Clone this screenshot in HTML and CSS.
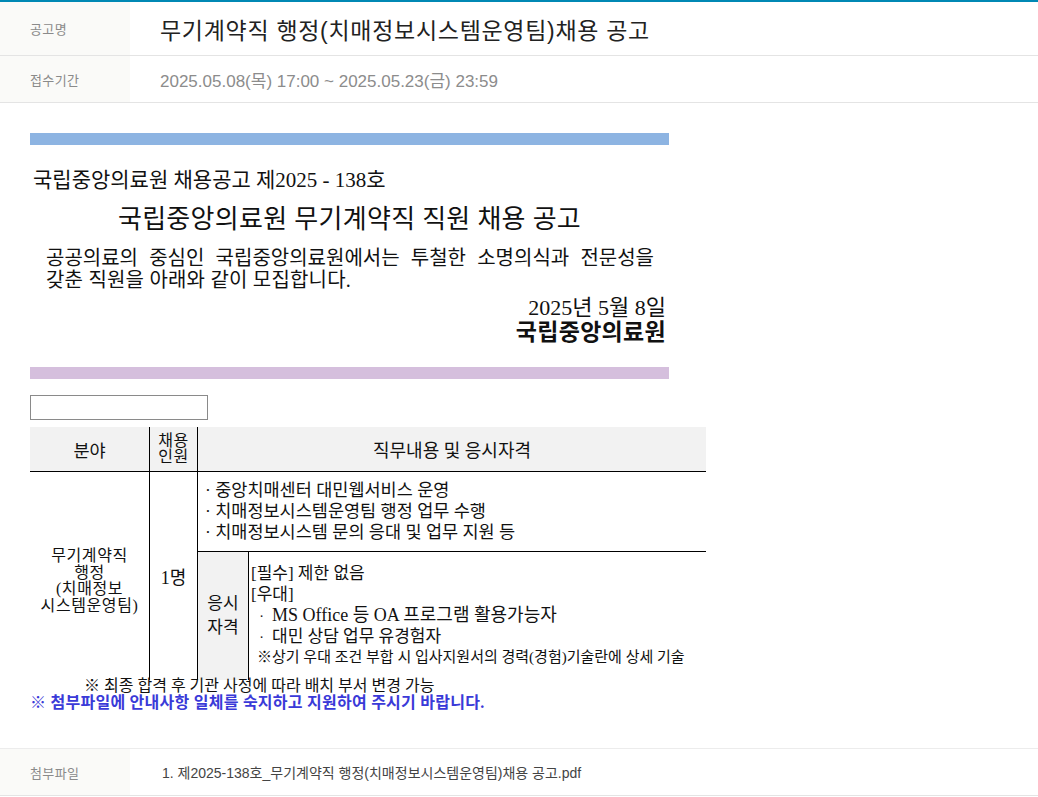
FILE: index.html
```html
<!DOCTYPE html>
<html lang="ko">
<head>
<meta charset="utf-8">
<title>무기계약직 행정(치매정보시스템운영팀)채용 공고</title>
<link rel="stylesheet" href="styles.css">
</head>
<body>
<div class="page">
  <div class="info-row row-title">
    <div class="label">공고명</div>
    <div class="value title">무기계약직 행정(치매정보시스템운영팀)채용 공고</div>
  </div>
  <div class="info-row">
    <div class="label">접수기간</div>
    <div class="value period">2025.05.08(목) 17:00 ~ 2025.05.23(금) 23:59</div>
  </div>

  <div class="content">
    <div class="notice">
      <div class="bar bar-blue"></div>
      <p class="doc-no">국립중앙의료원 채용공고 제2025 - 138호</p>
      <h1 class="doc-title">국립중앙의료원 무기계약직 직원 채용 공고</h1>
      <p class="intro intro-first">공공의료의 &nbsp;중심인 &nbsp;국립중앙의료원에서는 &nbsp;투철한 &nbsp;소명의식과 &nbsp;전문성을</p>
      <p class="intro intro-second">갖춘 직원을 아래와 같이 모집합니다.</p>
      <p class="date">2025년 5월 8일</p>
      <p class="org">국립중앙의료원</p>
      <div class="bar bar-purple"></div>
    </div>

    <div class="blank-box"></div>

    <table class="jobs">
      <thead>
        <tr>
          <th class="c-field">분야</th>
          <th class="c-num"><span class="stack">채용</span><span class="stack">인원</span></th>
          <th colspan="2" class="c-desc">직무내용 및 응시자격</th>
        </tr>
      </thead>
      <tbody>
        <tr>
          <td rowspan="2" class="field">
            <span class="f-line">무기계약직</span>
            <span class="f-line">행정</span>
            <span class="f-line">(치매정보</span>
            <span class="f-line">시스템운영팀)</span>
          </td>
          <td rowspan="2" class="num">1명</td>
          <td colspan="2" class="duties">
            <div class="d-line">· 중앙치매센터 대민웹서비스 운영</div>
            <div class="d-line">· 치매정보시스템운영팀 행정 업무 수행</div>
            <div class="d-line">· 치매정보시스템 문의 응대 및 업무 지원 등</div>
          </td>
        </tr>
        <tr>
          <td class="qual-head">응시<br>자격</td>
          <td class="qual">
            <div class="q-line">[필수] 제한 없음</div>
            <div class="q-line">[우대]</div>
            <div class="q-item"><span class="dot">·</span>MS Office 등 OA 프로그램 활용가능자</div>
            <div class="q-item q-small"><span class="dot">·</span>대민 상담 업무 유경험자</div>
            <div class="q-note">※상기 우대 조건 부합 시 입사지원서의 경력(경험)기술란에 상세 기술</div>
          </td>
        </tr>
      </tbody>
    </table>
    <p class="note">※ 최종 합격 후 기관 사정에 따라 배치 부서 변경 가능</p>
    <p class="note-blue">※ 첨부파일에 안내사항 일체를 숙지하고 지원하여 주시기 바랍니다.</p>
  </div>

  <div class="info-row row-file">
    <div class="label">첨부파일</div>
    <div class="value file">1. 제2025-138호_무기계약직 행정(치매정보시스템운영팀)채용 공고.pdf</div>
  </div>
</div>
</body>
</html>
```

FILE: styles.css
```css
html, body {
  margin: 0;
  padding: 0;
  background: #fff;
}
body {
  font-family: "Liberation Sans", "Noto Sans CJK KR", sans-serif;
  color: #222;
}
.page {
  border-top: 2px solid #0088b4;
}
.info-row {
  display: flex;
  height: 46px;
  border-bottom: 1px solid #e4e4e4;
}
.row-title {
  height: 53px;
}
.row-file {
  border-top: 1px solid #ececec;
}
.label {
  width: 100px;
  padding-left: 30px;
  background: #fafaf8;
  display: flex;
  align-items: center;
  font-size: 13px;
  letter-spacing: 0.4px;
  color: #8a8a8a;
}
.value {
  padding-left: 30px;
  display: flex;
  align-items: center;
}
.title {
  font-size: 23px;
  letter-spacing: 0.7px;
  color: #222;
}
.period {
  font-size: 17px;
  color: #8c8c8c;
}
.file {
  font-size: 14px;
  color: #444;
  padding-left: 32px;
}

.content {
  padding: 30px 30px 37px;
  font-family: "Liberation Serif", "Noto Sans CJK KR", serif;
  color: #111;
}
.notice {
  width: 639px;
}
.bar {
  height: 12px;
}
.bar-blue {
  background: #8db4e2;
}
.bar-purple {
  background: #d5bfdd;
  margin-top: 21px;
}
p {
  margin: 0;
}
.doc-no {
  font-size: 21px;
  line-height: 24px;
  margin-top: 23px;
  padding-left: 3px;
  white-space: nowrap;
}
.doc-title {
  font-size: 26px;
  font-weight: normal;
  text-align: center;
  line-height: 32px;
  letter-spacing: 0.3px;
  margin: 12px 0 0;
  white-space: nowrap;
}
.intro {
  font-size: 20px;
  line-height: 22px;
  padding-left: 16px;
}
.intro-first {
  margin-top: 11px;
  width: 608px;
  text-align: justify;
  text-align-last: justify;
}
.intro-second {
  white-space: nowrap;
  letter-spacing: 0.2px;
}
.date {
  font-size: 22px;
  line-height: 24px;
  text-align: right;
  padding-right: 3px;
  margin-top: 5px;
}
.org {
  font-size: 23px;
  font-weight: bold;
  line-height: 26px;
  text-align: right;
  padding-right: 3px;
  letter-spacing: 0.3px;
}
.blank-box {
  width: 176px;
  height: 23px;
  border: 1px solid #8a8a8a;
  margin-top: 16px;
}
.jobs {
  width: 676px;
  border-collapse: collapse;
  margin-top: 7px;
  font-size: 17.5px;
}
.jobs th {
  background: #f2f2f2;
  font-weight: normal;
  height: 44px;
  padding: 0;
  border-bottom: 1px solid #000;
}
.jobs .c-field {
  width: 119px;
  border-right: 1px solid #000;
}
.jobs .c-num {
  width: 47px;
  border-right: 1px solid #000;
  font-size: 16px;
}
.stack {
  display: block;
  height: 16px;
  line-height: 16px;
  letter-spacing: 0.5px;
}
.jobs .c-desc {
  font-size: 18px;
}
.jobs td {
  padding: 0;
  vertical-align: middle;
}
.field {
  text-align: center;
  border-right: 1px solid #000;
  font-size: 16px;
  letter-spacing: 0.6px;
  padding-top: 10px !important;
}
.f-line {
  display: block;
  height: 16.5px;
  line-height: 16.5px;
  white-space: nowrap;
}
.num {
  text-align: center;
  font-size: 18px;
  border-right: 1px solid #000;
}
.duties {
  height: 79px;
  border-bottom: 1px solid #000;
  padding-left: 7px !important;
}
.d-line {
  height: 21px;
  line-height: 21px;
}
.qual-head {
  width: 50px;
  background: #f2f2f2;
  border-right: 1px solid #000;
  text-align: center;
  line-height: 24px;
  font-size: 17px;
}
.qual {
  height: 107px;
  padding: 11px 0 10px 2px !important;
  vertical-align: top !important;
}
.q-line,
.q-item,
.q-note {
  height: 21px;
  line-height: 21px;
  white-space: nowrap;
}
.q-line {
  font-size: 17px;
}
.q-item {
  font-size: 18px;
}
.q-small {
  font-size: 17px;
}
.q-item .dot {
  display: inline-block;
  width: 21px;
  text-align: center;
  font-size: 14px;
}
.q-note {
  font-size: 15px;
  padding-left: 6px;
}
.note {
  font-size: 16px;
  line-height: 17px;
  padding-left: 54px;
  margin-top: -3px;
}
.note-blue {
  font-size: 16px;
  line-height: 17px;
  font-weight: bold;
  letter-spacing: 0.25px;
  color: #3a3ad8;
}
```
